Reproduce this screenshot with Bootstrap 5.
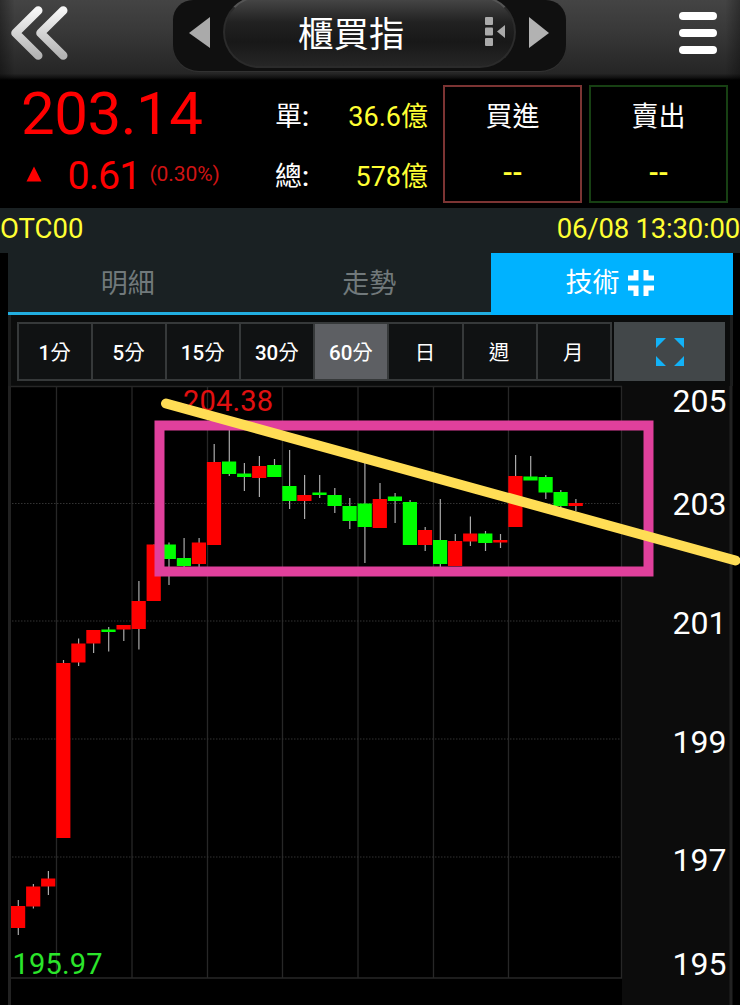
<!DOCTYPE html>
<html lang="zh-Hant">
<head>
<meta charset="utf-8">
<meta name="viewport" content="width=device-width, initial-scale=1">
<title>櫃買指</title>
<link rel="stylesheet" href="https://cdn.jsdelivr.net/npm/bootstrap@5.3.0/dist/css/bootstrap.min.css">
<style>
body{background:#000;color:#fff;font-family:Roboto,"Noto Sans CJK TC",sans-serif;width:740px;height:1005px;overflow:hidden;line-height:1}
svg{display:block;flex:none}
.topbar{height:80px;background:linear-gradient(90deg,rgba(0,0,0,.35),transparent 2%,transparent 98%,rgba(0,0,0,.3)),linear-gradient(#444 0,#383838 40%,#252525 92%,#111 97%,#000 100%)}
.switcher{width:393px;height:71px;margin-left:105px;background:#101010;border-radius:20px 20px 26px 26px;padding:0 17px 0 16px;box-shadow:0 1px 1px #333}
.pill{width:293px;height:72px;margin-top:-4px;border-radius:36px;background:linear-gradient(#484848,#222 35%,#181818 65%,#262626);border:2px solid #2b2b2b;border-top-color:#555}
.title-text{font-size:35.5px;line-height:40px;margin-left:73px;padding-top:6px}
.quote{height:128px}
.quote-left{width:270px}
.up{color:#f00}
.price{font-size:60px;line-height:68px;height:68px;padding-left:21px;letter-spacing:-.5px}
.chg{font-size:39.4px;letter-spacing:-1px;width:82px;margin-left:21.5px;padding-top:1px}
.pct{font-size:21px;color:#d01414;letter-spacing:-.1px;margin-bottom:2px}
.lbl{font-size:27px;line-height:36px}
.yel{color:#ff3}
.vol{width:153px;margin-left:5px;padding-top:19px}
.colon{font-weight:500}
.dash{font-size:29px;font-weight:500}
.box{width:139px;height:118px;margin:5px 0 0 15px;border:2px solid #7c3433}
.box.sell{border-color:#174013;margin-left:7px}
.info{height:45px;background:#1a2123;font-size:27.5px;line-height:42px}
.stamp{letter-spacing:-.2px}
.tabs{height:62px;margin:0 7px 0 8px;font-size:27px}
.tab-item{width:241.5px;background:#1a2123;color:#71797b;border-bottom:3px solid #22aee0;line-height:62px;padding-right:2px;height:62px}
.tab-item.on{background:#00b2ff;color:#fff;border-color:#00b2ff;width:242px;padding-right:5px}
.toolbar{height:71px;margin:0 7px 0 8px;background:#0b0c0c;border:solid #1d1e1e;border-width:0 3px;padding:7px 5px 4px 6px}
.periods{width:595px;height:59px;border:2px solid #36393a;background:#101213;font-size:20.5px}
.periods b{font-weight:500}
.periods>div{border-right:2px solid #36393a;line-height:58px;height:55px;padding-right:1px}
.periods>div:last-child{border:0}
.periods>.on{background:#5d5f63}
.expand{width:111px;height:59px;background:#424749}
.chart{margin-top:-10px}
text{font-family:Roboto,sans-serif}
</style>
</head>
<body>
<header class="topbar d-flex align-items-start">
  <svg width="68" height="80" viewBox="0 0 68 80"><defs><linearGradient id="metal" x1="0" y1="0" x2="0" y2="1"><stop stop-color="#f6f6f6"/><stop offset="1" stop-color="#b4b4b4"/></linearGradient></defs>
    <g fill="none" stroke="url(#metal)" stroke-width="8.600" stroke-linecap="round" stroke-linejoin="round"><path d="M38.200 10.500 15.500 33 38.200 55.500"/><path d="M63.200 10.500 40.500 33 63.200 55.500"/></g></svg>
  <div class="switcher d-flex justify-content-between">
    <svg width="21" height="68"><path d="M0 33 21 17V48Z" fill="#aaa"/></svg>
    <div class="pill d-flex align-items-center">
      <div class="title-text">櫃買指</div>
      <svg class="ms-auto me-2" width="22" height="32"><g fill="#aaa"><rect x="1" y="1" width="8" height="8" rx="1"/><rect x="1" y="11.500" width="8" height="8" rx="1"/><rect x="1" y="22" width="8" height="8" rx="1"/><path d="M13 15.500 21 9v13Z"/></g></svg>
    </div>
    <svg width="20" height="68"><path d="M20 33 0 17V48Z" fill="#b2b2b2"/></svg>
  </div>
  <svg class="ms-auto me-3" width="48" height="66"><path d="M7 16H37M7 33H37M7 50H37" stroke="#fff" stroke-width="8" stroke-linecap="round"/></svg>
</header>

<section class="quote d-flex">
  <div class="quote-left">
    <div class="price up">203.14</div>
    <div class="d-flex align-items-center up pt-1">
      <svg width="46" height="46"><path d="M26.500 29.500 34 14.500 41.500 29.500Z" fill="#f00"/></svg>
      <div class="chg">0.61</div><div class="pct">(0.30%)</div>
    </div>
  </div>
  <div class="vol lbl d-flex flex-column">
    <div class="d-flex justify-content-between"><span>單<span class="colon">:</span></span><span class="yel">36.6億</span></div>
    <div class="d-flex justify-content-between mt-4"><span>總<span class="colon">:</span></span><span class="yel">578億</span></div>
  </div>
  <div class="box lbl text-center"><div class="pt-2 mt-1">買進</div><div class="yel dash mt-3 pt-1">--</div></div>
  <div class="box sell lbl text-center"><div class="pt-2 mt-1">賣出</div><div class="yel dash mt-3 pt-1">--</div></div>
</section>

<div class="info yel d-flex justify-content-between"><span>OTC00</span><span class="stamp">06/08 13:30:00</span></div>

<nav class="tabs d-flex text-center">
  <div class="tab-item">明細</div><div class="tab-item">走勢</div>
  <div class="tab-item on d-flex justify-content-center align-items-center"><span>技術</span><svg class="ms-2" width="26" height="26"><path d="M0 8H8V0M18 0V8H26M26 18H18V26M8 26V18H0" fill="none" stroke="#fff" stroke-width="5"/></svg></div>
</nav>

<div class="toolbar d-flex justify-content-between">
  <div class="periods d-flex text-center">
    <div class="flex-fill w-100"><b>1</b>分</div><div class="flex-fill w-100"><b>5</b>分</div><div class="flex-fill w-100"><b>15</b>分</div><div class="flex-fill w-100"><b>30</b>分</div><div class="flex-fill w-100 on"><b>60</b>分</div><div class="flex-fill w-100">日</div><div class="flex-fill w-100">週</div><div class="flex-fill w-100">月</div>
  </div>
  <div class="expand d-flex align-items-center justify-content-center"><svg width="28" height="28" fill="#12b2f7"><path d="M0 0H10L0 10ZM28 0V10L18 0ZM28 28H18L28 18ZM0 28V18L10 28Z"/></svg></div>
</div>

<svg class="chart" width="740" height="629" viewBox="0 376 740 629">
  <rect x="622" y="386" width="108" height="619" fill="#0c0c0c"/>
  <path d="M9.500 386V1005M731 386V1005" stroke="#222" stroke-width="3"/>
  <path d="M11 386.500H621.500V978H11M56.500 386V978M132 386V978M207.500 386V978M282.500 386V978M358 386V978M433.500 386V978M508.500 386V978" fill="none" stroke="#272727" stroke-width="1.300"/>
  <path d="M12 503.500H621M12 621H621M12 739H621M12 857H621" stroke="#333" stroke-dasharray="1.500 1.500"/>
  <g id="candles"></g>
  <g fill="#fff" font-size="32" text-anchor="end">
    <text x="726.500" y="411.500">205</text><text x="726.500" y="515">203</text><text x="726.500" y="634">201</text><text x="726.500" y="752.500">199</text><text x="726.500" y="871">197</text><text x="726.500" y="975">195</text>
  </g>
  <text x="183" y="411" font-size="29" fill="#e01010" textLength="90">204.38</text>
  <text x="12.500" y="974" font-size="29" fill="#2be52b" textLength="90">195.97</text>
  <rect x="159.500" y="425.500" width="489" height="146" fill="none" stroke="#e0409c" stroke-width="10"/>
  <path d="M166 403.500 735.500 560.500" stroke="#ffdd55" stroke-width="10" stroke-linecap="round"/>
</svg>

<script src="https://cdn.jsdelivr.net/npm/bootstrap@5.3.0/dist/js/bootstrap.bundle.min.js"></script>
<script>
// one row per bar: direction, body top, body bottom, wick top, wick bottom
const bars=[
['r',906,928,900,935],['r',886.5,906.5,884,908.5],['r',878.5,886.5,871,895],['r',663,838,660,838],['r',643.5,662.5,638.5,666],
['r',630,643.5,630,653],['g',629.5,632,627,651.5],['r',625,629.5,625,641],['r',601,629,581,649.5],['r',544.5,601,544.5,601],
['g',544.5,559,542.5,585],['g',558,566,538,568],['r',542.5,564,538,568],['r',462,545,444,545],['g',461.5,474,430,476],
['g',473.5,477,463,491],['r',466,478,456,497],['g',465,477,459,477],['g',486,501,450,509],['r',495,501,475,519],
['g',492.5,495,475,498],['g',495,506,488,513],['g',506,521,498,529],['g',503.5,527,463,563],['r',499,528,483,528],
['g',496.5,501,493,523],['g',502,545,500,545],['r',530,545,527,551],['g',540,564,499,567],['r',541,566,534,566],
['r',533.5,541.5,516.5,546],['g',533.5,543,531,551],['r',540,542.5,534,548],['r',476,527,455,527],['g',476.5,480.5,456,480],
['g',477,492.5,475,499],['g',492,506,490,508],['r',503,506,499,511]];
document.getElementById('candles').innerHTML=bars.map(([c,t,b,h,l],i)=>{
  const x=11+15.07*i;
  return `<path d="M${(x+7.3).toFixed(1)} ${h}V${l}" stroke="#aaa" stroke-width="1.2"/><rect x="${x.toFixed(1)}" y="${t}" width="14.2" height="${b-t}" fill="${c==='r'?'#f00':'#0f0'}"/>`;
}).join('');
</script>
</body>
</html>
